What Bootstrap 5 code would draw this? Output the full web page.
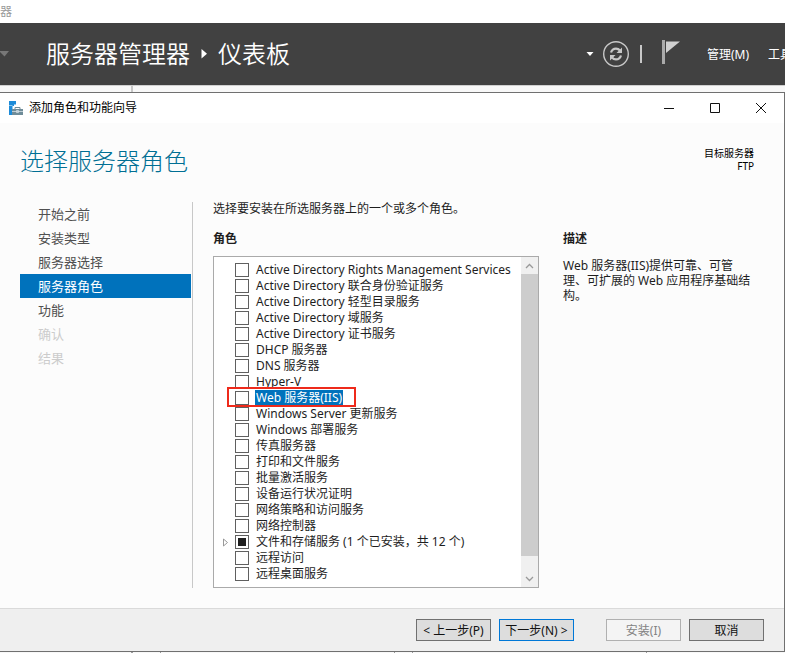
<!DOCTYPE html>
<html lang="zh-CN">
<head>
<meta charset="utf-8">
<meta name="viewport" content="width=device-width, initial-scale=1">
<title>添加角色和功能向导</title>
<link href="https://cdn.jsdelivr.net/npm/bootstrap@5.3.0/dist/css/bootstrap.min.css" rel="stylesheet">
<style>
  body { font: 12px/16px "Noto Sans", "Noto Sans CJK SC", sans-serif; color: #1e1e1e; background: #f8f8f8; overflow-x: hidden; }
  svg { display: block; }
  button { font: inherit; color: inherit; }
  .under-strip { height: 23px; color: #999; line-height: 24px; overflow: hidden; }
  .manager-bar { height: 62px; background: #414141; color: #fff; padding-left: 46px; white-space: nowrap; }
  .manager-bar h1 { font-size: 24px; line-height: 32px; font-weight: 350; }
  .manager-bar a { color: #fff; text-decoration: none; line-height: 16px; padding-top: 2px; }
  .nav-caret { left: 0; top: 28px; }
  .plain-btn { background: none; border: 0; padding: 0; }
  .divider { width: 2px; height: 18px; background: #c8c8c8; margin: 0 20px 0 10px; }
  .menu-main { margin-left: 27px; }
  .menu-cut { width: 17px; overflow: hidden; margin-left: 19px; }
  .pane-gap { height: 7px; border-top: 1px solid #d0d0d0; }
  .pane-gap i { display: block; width: 2px; height: 6px; margin-left: 131px; background: #c8c8c8; }
  .wizard { border: 1px solid #707070; border-left: 0; background: #fcfcfc; }
  .wizard-title { height: 30px; background: #fff; padding: 0 17px 0 8px; }
  .wizard-title h2 { font-size: 12px; line-height: 16px; font-weight: 400; color: #000; margin-left: 6px; }
  .win-buttons { gap: 34px; }
  .wizard-head { padding: 22px 30px 0 20px; height: 79px; }
  .wizard-head h3 { font-size: 24px; line-height: 32px; font-weight: 300; color: #006f94; }
  .target { font-size: 10px; line-height: 13px; text-align: right; padding-top: 2px; color: #000; }
  .wizard-body { padding: 0 29px 20px 20px; }
  .steps { width: 173px; padding-right: 1px; border-right: 1px solid #c8c8c8; font-size: 13px; line-height: 24px; margin-right: 20px; }
  .steps a { display: block; padding-left: 18px; color: #505050; text-decoration: none; }
  .steps a.current { background: #0072bc; color: #fff; }
  .steps a.off { color: #ccc; }
  .roles { min-width: 326px; }
  .intro { line-height: 14px; }
  .section-head { font-size: 12px; line-height: 16px; font-weight: 700; }
  .intro + .section-head { margin-top: 15px; }
  .role-box { border: 1px solid #aaa; background: #fff; margin-top: 9px; }
  .role-list { padding: 5px 0 4px 9px; }
  .role-item { height: 16px; white-space: nowrap; }
  .twisty { width: 12px; }
  .role-item input { appearance: none; width: 14px; height: 14px; margin: 0 6px 0 0; border: 1px solid #606060; background: #fff; flex: none; }
  .role-item input.partly { background: #202020 content-box; padding: 2px; }
  .role-item label { line-height: 16px; padding: 0 1px; }
  .role-item label.picked { background: #0072bc; color: #fff; }
  .red-frame { left: -8px; top: -3px; width: 129px; height: 20px; border: 2px solid #ee2a1b; pointer-events: none; }
  .scroll-bar { width: 17px; background: #f0f0f0; }
  .scroll-bar button { height: 17px; display: flex; align-items: center; justify-content: center; }
  .scroll-thumb { flex: 1; background: #cdcdcd; margin-bottom: 14px; }
  .about { width: 192px; margin-left: 24px; padding-top: 29px; flex: none; }
  .about p { line-height: 15px; margin-top: 11px; }
  .wizard-foot { background: #efefef; border-top: 1px solid #dadada; padding: 10px 20px; }
  .wizard-foot .btn { width: 75px; height: 22px; border: 1px solid #707070; border-radius: 0; background: #ddd; padding: 0; font-size: 12px; line-height: 22px; color: #111; white-space: nowrap; }
  .wizard-foot .btn.primary-step { border-color: #0078d7; }
  .wizard-foot .btn:disabled { background: #f4f4f4; border-color: #b0b0b0; color: #838383; opacity: 1; }
</style>
<script src="https://cdn.jsdelivr.net/npm/bootstrap@5.3.0/dist/js/bootstrap.bundle.min.js"></script>
</head>
<body>
<div class="min-vh-100 d-flex flex-column">
  <div class="under-strip bg-white"><span>器</span></div>
  <header class="manager-bar d-flex align-items-center position-relative overflow-hidden">
    <svg class="nav-caret position-absolute" width="9" height="6" viewBox="0 0 9 6"><path d="M0 0h9L4.500 5.500 0 1z" fill="#777"/></svg>
    <h1 class="m-0 d-flex align-items-center">服务器管理器
      <svg class="mx-2" width="12" height="10" viewBox="0 0 12 10"><path d="M3.500 0v9.500L9 4.800z" fill="#fff"/></svg>仪表板</h1>
    <div class="d-flex align-items-center ms-auto">
      <button class="plain-btn me-2" aria-label="更多"><svg width="8" height="5" viewBox="0 0 8 5"><path d="M.5 0h7L4 4z" fill="#fff"/></svg></button>
      <button class="plain-btn" aria-label="刷新">
        <svg width="28" height="28" viewBox="0 0 28 28" fill="none" stroke="#c8c8c8">
          <circle cx="14" cy="14" r="12.300" stroke-width="1.400"/>
          <path d="M9 12.500c.8-2.600 2.600-3.900 5-3.900 1.700 0 3 .7 4 1.900" stroke-width="2.200"/>
          <path d="M19 15.500c-.8 2.600-2.600 3.900-5 3.900-1.700 0-3-.7-4-1.900" stroke-width="2.200"/>
          <path d="M20 7.500v5.500h-5.500z M8 20.500v-5.500h5.500z" fill="#c8c8c8" stroke="none"/>
        </svg></button>
      <span class="divider"></span>
      <button class="plain-btn" aria-label="通知"><svg width="18" height="28" viewBox="0 0 18 28"><path d="M0 0h3v24H0z" fill="#aaa"/><path d="M4 1.500h14L4 13z" fill="#d0d0d0"/></svg></button>
      <a href="#" class="menu-main">管理(M)</a>
      <a href="#" class="menu-cut">工具</a>
    </div>
  </header>
  <div class="pane-gap"><i></i></div>

  <main class="wizard d-flex flex-column flex-grow-1">
    <div class="wizard-title d-flex align-items-center">
      <svg width="15" height="15" viewBox="0 0 15 15"><path d="M1 0h7v3.500H6V5H4.500v9H1z" fill="#1d8bd8"/><path d="M1 4h3.500v1H1z" fill="#8cc6ee"/><path d="M7 8V6.500h5V8" fill="none" stroke="#6f8c99"/><path d="M4 8h11v6H4z" fill="#6f8c99"/><path d="M4 10.500h11M8.500 9.500h2v2h-2z" fill="none" stroke="#d5dfe4" stroke-width=".8"/></svg>
      <h2 class="mb-0">添加角色和功能向导</h2>
      <div class="win-buttons d-flex ms-auto">
        <button class="plain-btn" aria-label="最小化"><svg width="12" height="12" viewBox="0 0 12 12"><path d="M1 6h10v1H1z" fill="#111"/></svg></button>
        <button class="plain-btn" aria-label="最大化"><svg width="12" height="12" viewBox="0 0 12 12"><path d="M1.500 1.500h9v9h-9z" fill="none" stroke="#111"/></svg></button>
        <button class="plain-btn" aria-label="关闭"><svg width="12" height="12" viewBox="0 0 12 12"><path d="M1 1l10 10M11 1L1 11" stroke="#111"/></svg></button>
      </div>
    </div>

    <div class="wizard-head d-flex justify-content-between align-items-start">
      <h3 class="m-0">选择服务器角色</h3>
      <div class="target"><div>目标服务器</div><div>FTP</div></div>
    </div>

    <div class="wizard-body d-flex flex-grow-1">
      <nav class="steps flex-shrink-0" aria-label="步骤">
        <a href="#">开始之前</a>
        <a href="#">安装类型</a>
        <a href="#">服务器选择</a>
        <a href="#" class="current" aria-current="step">服务器角色</a>
        <a href="#">功能</a>
        <a href="#" class="off">确认</a>
        <a href="#" class="off">结果</a>
      </nav>
      <section class="roles d-flex flex-column flex-grow-1">
        <p class="intro mb-0">选择要安装在所选服务器上的一个或多个角色。</p>
        <h4 class="section-head mb-0">角色</h4>
        <div class="role-box d-flex flex-grow-1">
          <div class="role-list flex-grow-1">
            <div class="role-item d-flex align-items-center"><span class="twisty"></span><input type="checkbox" id="r1"><label for="r1">Active Directory Rights Management Services</label></div>
            <div class="role-item d-flex align-items-center"><span class="twisty"></span><input type="checkbox" id="r2"><label for="r2">Active Directory 联合身份验证服务</label></div>
            <div class="role-item d-flex align-items-center"><span class="twisty"></span><input type="checkbox" id="r3"><label for="r3">Active Directory 轻型目录服务</label></div>
            <div class="role-item d-flex align-items-center"><span class="twisty"></span><input type="checkbox" id="r4"><label for="r4">Active Directory 域服务</label></div>
            <div class="role-item d-flex align-items-center"><span class="twisty"></span><input type="checkbox" id="r5"><label for="r5">Active Directory 证书服务</label></div>
            <div class="role-item d-flex align-items-center"><span class="twisty"></span><input type="checkbox" id="r6"><label for="r6">DHCP 服务器</label></div>
            <div class="role-item d-flex align-items-center"><span class="twisty"></span><input type="checkbox" id="r7"><label for="r7">DNS 服务器</label></div>
            <div class="role-item d-flex align-items-center"><span class="twisty"></span><input type="checkbox" id="r8"><label for="r8">Hyper-V</label></div>
            <div class="role-item d-flex align-items-center"><span class="twisty"></span><span class="position-relative d-flex align-items-center"><input type="checkbox" id="r9"><label for="r9" class="picked">Web 服务器(IIS)</label><span class="red-frame position-absolute"></span></span></div>
            <div class="role-item d-flex align-items-center"><span class="twisty"></span><input type="checkbox" id="r10"><label for="r10">Windows Server 更新服务</label></div>
            <div class="role-item d-flex align-items-center"><span class="twisty"></span><input type="checkbox" id="r11"><label for="r11">Windows 部署服务</label></div>
            <div class="role-item d-flex align-items-center"><span class="twisty"></span><input type="checkbox" id="r12"><label for="r12">传真服务器</label></div>
            <div class="role-item d-flex align-items-center"><span class="twisty"></span><input type="checkbox" id="r13"><label for="r13">打印和文件服务</label></div>
            <div class="role-item d-flex align-items-center"><span class="twisty"></span><input type="checkbox" id="r14"><label for="r14">批量激活服务</label></div>
            <div class="role-item d-flex align-items-center"><span class="twisty"></span><input type="checkbox" id="r15"><label for="r15">设备运行状况证明</label></div>
            <div class="role-item d-flex align-items-center"><span class="twisty"></span><input type="checkbox" id="r16"><label for="r16">网络策略和访问服务</label></div>
            <div class="role-item d-flex align-items-center"><span class="twisty"></span><input type="checkbox" id="r17"><label for="r17">网络控制器</label></div>
            <div class="role-item d-flex align-items-center"><span class="twisty"><svg width="6" height="9" viewBox="0 0 6 9"><path d="M.5 1v7L4.500 4.500z" fill="#fff" stroke="#999"/></svg></span><input type="checkbox" class="partly" id="r18" checked><label for="r18">文件和存储服务 (1 个已安装，共 12 个)</label></div>
            <div class="role-item d-flex align-items-center"><span class="twisty"></span><input type="checkbox" id="r19"><label for="r19">远程访问</label></div>
            <div class="role-item d-flex align-items-center"><span class="twisty"></span><input type="checkbox" id="r20"><label for="r20">远程桌面服务</label></div>
          </div>
          <div class="scroll-bar d-flex flex-column flex-shrink-0">
            <button class="plain-btn" aria-label="向上滚动"><svg width="9" height="6" viewBox="0 0 9 6"><path d="M1 5l3.500-3.500L8 5" fill="none" stroke="#999" stroke-width="1.300"/></svg></button>
            <div class="scroll-thumb"></div>
            <button class="plain-btn" aria-label="向下滚动"><svg width="9" height="6" viewBox="0 0 9 6"><path d="M1 1l3.500 3.500L8 1" fill="none" stroke="#999" stroke-width="1.300"/></svg></button>
          </div>
        </div>
      </section>
      <aside class="about">
        <h4 class="section-head mb-0">描述</h4>
        <p class="mb-0">Web 服务器(IIS)提供可靠、可管理、可扩展的 Web 应用程序基础结构。</p>
      </aside>
    </div>

    <footer class="wizard-foot d-flex justify-content-end gap-2">
      <button class="btn">&lt; 上一步(P)</button>
      <button class="btn primary-step">下一步(N) &gt;</button>
      <button class="btn ms-4" disabled>安装(I)</button>
      <button class="btn">取消</button>
    </footer>
  </main>
  <svg width="100%" height="1"><path d="M131 0h2v1h-2zM160 0h1v1h-1zM394 0h1v1h-1zM412 0h1v1h-1zM646 0h1v1h-1z" fill="#999"/></svg>
</div>
</body>
</html>
